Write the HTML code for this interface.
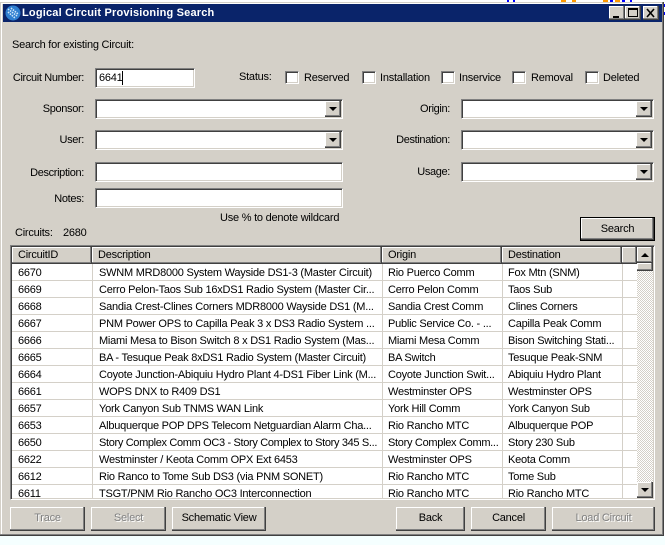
<!DOCTYPE html>
<html><head><meta charset="utf-8"><title>Logical Circuit Provisioning Search</title>
<style>
html,body{margin:0;padding:0;width:665px;height:545px;overflow:hidden;background:#fff}
*{box-sizing:border-box}
body{position:relative;font-family:"Liberation Sans",sans-serif;font-size:11px;letter-spacing:-.23px;color:#000}
div,span.a{position:absolute}
.win{left:0;top:2px;width:664px;height:534px;background:#d4d0c8;box-shadow:inset -1px -1px 0 #404040,inset -2px -2px 0 #808080,inset 1px 1px 0 #d4d0c8,inset 2px 2px 0 #fff}
.tb{left:3px;top:4px;width:659px;height:18px;background:#0a246a}
.tt{left:22px;top:6px;color:#fff;font-weight:bold;letter-spacing:.19px;line-height:14px;white-space:nowrap}
.wb{top:6px;width:16px;height:14px;background:#d4d0c8;box-shadow:inset -1px -1px 0 #404040,inset -2px -2px 0 #808080,inset 1px 1px 0 #fff}
.l{white-space:nowrap;line-height:14px}
.r{text-align:right;letter-spacing:-.35px}
.f{background:#fff;border:1px solid;border-color:#808080 #fff #fff #808080;box-shadow:inset 1px 1px 0 #404040,inset -1px -1px 0 #d4d0c8}
.dd{right:2px;top:2px;width:16px;height:16px;background:#d4d0c8;box-shadow:inset -1px -1px 0 #404040,inset -2px -2px 0 #808080,inset 1px 1px 0 #fff}
.dd:after,.dn:after{content:"";position:absolute;left:4px;top:6px;border:4px solid transparent;border-top:4px solid #000;border-bottom:0}
.c{top:71px;width:14px;height:13px;background:#fff;border:1px solid;border-color:#808080 #fff #fff #808080;box-shadow:inset 1px 1px 0 #404040,inset -1px -1px 0 #d4d0c8}
.b{height:24px;background:#d4d0c8;box-shadow:inset -1px -1px 0 #404040,inset -2px -2px 0 #808080,inset 1px 1px 0 #fff;text-align:center;line-height:23px;white-space:nowrap}
.dis{color:#808080;text-shadow:1px 1px 0 #fff}
.list{left:10px;top:245px;width:645px;height:255px;background:#fff;border:1px solid;border-color:#808080 #fff #fff #808080;box-shadow:inset 1px 1px 0 #404040,inset -1px -1px 0 #d4d0c8}
.h{top:247px;height:17px;background:#d4d0c8;box-shadow:inset -1px -1px 0 #404040,inset -2px -2px 0 #808080,inset 1px 1px 0 #fff;line-height:17px;padding-left:6px;white-space:nowrap}
.row{left:12px;width:625px;height:17px;border-bottom:1px solid #d4d0c8;line-height:18px;white-space:nowrap}
.row span{position:absolute;top:0}
.s1{left:6px}.s2{left:87px}.s3{left:376px}.s4{left:496px}
.v{top:264px;width:1px;height:234px;background:#d4d0c8}
.track{left:637px;top:247px;width:16px;height:251px;background:conic-gradient(#fff 25%,#d4d0c8 0 50%,#fff 0 75%,#d4d0c8 0) 0 0/2px 2px}
.sb{left:637px;width:16px;background:#d4d0c8;box-shadow:inset -1px -1px 0 #404040,inset -2px -2px 0 #808080,inset 1px 1px 0 #fff}
.up:after{content:"";position:absolute;left:4px;top:6px;border:4px solid transparent;border-bottom:4px solid #000;border-top:0}
.px{background:#00f;height:2px;top:0}
.po{background:#f90;height:2px;top:0}
</style></head><body>
<div style="left:0;top:536px;width:665px;height:9px;background:#f5ffff"></div>
<div class="px" style="left:507px;width:2px"></div><div class="px" style="left:513px;width:2px"></div>
<div class="po" style="left:561px;width:5px"></div><div class="po" style="left:572px;width:4px"></div>
<div class="po" style="left:603px;width:5px"></div><div class="px" style="left:610px;width:3px"></div><div class="po" style="left:615px;width:5px"></div><div class="px" style="left:622px;width:3px"></div><div class="px" style="left:630px;width:2px"></div>
<div class="px" style="left:664px;top:4px;width:1px;height:3px"></div><div class="px" style="left:664px;top:12px;width:1px;height:3px"></div>
<div class="win"></div>
<div class="tb"></div>
<svg style="position:absolute;left:5px;top:5px" width="16" height="16" viewBox="0 0 16 16"><circle cx="8" cy="8" r="7.5" fill="#2f7fd0"/><path d="M3 4l9 7M3 7l7 6M6 3l7 6" stroke="#cfe6fa" stroke-width="1.6" stroke-dasharray="1.5 1"/></svg>
<div class="tt">Logical Circuit Provisioning Search</div>
<div class="wb" style="left:609px"><svg width="16" height="14" style="position:absolute;left:0;top:0"><path d="M4 10h6v2H4z" fill="#000"/></svg></div>
<div class="wb" style="left:625px"><svg width="16" height="14" style="position:absolute;left:0;top:0"><path d="M3.500 2.500h9v8h-9zM3 3.500h10" fill="none" stroke="#000"/></svg></div>
<div class="wb" style="left:643px"><svg width="16" height="14" style="position:absolute;left:0;top:0"><path d="M4 3l7 8M11 3l-7 8" fill="none" stroke="#000" stroke-width="1.600"/></svg></div>

<div class="l" style="left:12px;top:38px">Search for existing Circuit:</div>
<div class="l r" style="left:0;width:84px;top:71px">Circuit Number:</div>
<div class="f l" style="left:95px;top:68px;width:100px;height:20px;padding:2px 0 0 3px">6641</div>
<div style="left:122px;top:71px;width:1px;height:14px;background:#000"></div>
<div class="l" style="left:239px;top:70px">Status:</div>
<div class="c" style="left:285px"></div><div class="l" style="left:304px;top:71px">Reserved</div>
<div class="c" style="left:362px"></div><div class="l" style="left:380px;top:71px">Installation</div>
<div class="c" style="left:441px"></div><div class="l" style="left:459px;top:71px">Inservice</div>
<div class="c" style="left:512px"></div><div class="l" style="left:531px;top:71px">Removal</div>
<div class="c" style="left:585px"></div><div class="l" style="left:603px;top:71px">Deleted</div>

<div class="l r" style="left:0;width:84px;top:102px">Sponsor:</div>
<div class="f" style="left:95px;top:99px;width:248px;height:20px"><div class="dd" style="right:1px;top:1px"></div></div>
<div class="l r" style="left:0;width:84px;top:133px">User:</div>
<div class="f" style="left:95px;top:130px;width:248px;height:20px"><div class="dd" style="right:1px;top:1px"></div></div>
<div class="l r" style="left:0;width:84px;top:166px">Description:</div>
<div class="f" style="left:95px;top:162px;width:248px;height:20px"></div>
<div class="l r" style="left:0;width:84px;top:192px">Notes:</div>
<div class="f" style="left:95px;top:188px;width:248px;height:20px"></div>

<div class="l r" style="left:380px;width:70px;top:102px">Origin:</div>
<div class="f" style="left:461px;top:99px;width:193px;height:20px"><div class="dd" style="right:1px;top:1px"></div></div>
<div class="l r" style="left:380px;width:70px;top:133px">Destination:</div>
<div class="f" style="left:461px;top:130px;width:193px;height:20px"><div class="dd" style="right:1px;top:1px"></div></div>
<div class="l r" style="left:380px;width:70px;top:165px">Usage:</div>
<div class="f" style="left:461px;top:162px;width:193px;height:20px"><div class="dd" style="right:1px;top:1px"></div></div>

<div class="l" style="left:220px;top:211px">Use % to denote wildcard</div>
<div class="l" style="left:15px;top:226px">Circuits:</div>
<div class="l" style="left:63px;top:226px">2680</div>
<div class="b" style="left:580px;top:217px;width:75px;border:1px solid #000">Search</div>

<div class="list"></div>
<div class="h" style="left:12px;width:80px">CircuitID</div>
<div class="h" style="left:92px;width:290px">Description</div>
<div class="h" style="left:382px;width:120px">Origin</div>
<div class="h" style="left:502px;width:120px">Destination</div>
<div class="h" style="left:622px;width:15px"></div>

<div class="row" style="top:264px"><span class="s1">6670</span><span class="s2">SWNM MRD8000 System Wayside DS1-3 (Master Circuit)</span><span class="s3">Rio Puerco Comm</span><span class="s4">Fox Mtn (SNM)</span></div>
<div class="row" style="top:281px"><span class="s1">6669</span><span class="s2">Cerro Pelon-Taos Sub 16xDS1 Radio System (Master Cir...</span><span class="s3">Cerro Pelon Comm</span><span class="s4">Taos Sub</span></div>
<div class="row" style="top:298px"><span class="s1">6668</span><span class="s2">Sandia Crest-Clines Corners MDR8000 Wayside DS1 (M...</span><span class="s3">Sandia Crest Comm</span><span class="s4">Clines Corners</span></div>
<div class="row" style="top:315px"><span class="s1">6667</span><span class="s2">PNM Power OPS to Capilla Peak 3 x DS3 Radio System ...</span><span class="s3">Public Service Co. - ...</span><span class="s4">Capilla Peak Comm</span></div>
<div class="row" style="top:332px"><span class="s1">6666</span><span class="s2">Miami Mesa to Bison Switch 8 x DS1 Radio System (Mas...</span><span class="s3">Miami Mesa Comm</span><span class="s4">Bison Switching Stati...</span></div>
<div class="row" style="top:349px"><span class="s1">6665</span><span class="s2">BA - Tesuque Peak 8xDS1 Radio System (Master Circuit)</span><span class="s3">BA Switch</span><span class="s4">Tesuque Peak-SNM</span></div>
<div class="row" style="top:366px"><span class="s1">6664</span><span class="s2">Coyote Junction-Abiquiu Hydro Plant 4-DS1 Fiber Link (M...</span><span class="s3">Coyote Junction Swit...</span><span class="s4">Abiquiu Hydro Plant</span></div>
<div class="row" style="top:383px"><span class="s1">6661</span><span class="s2">WOPS DNX to R409 DS1</span><span class="s3">Westminster OPS</span><span class="s4">Westminster OPS</span></div>
<div class="row" style="top:400px"><span class="s1">6657</span><span class="s2">York Canyon Sub TNMS WAN Link</span><span class="s3">York Hill Comm</span><span class="s4">York Canyon Sub</span></div>
<div class="row" style="top:417px"><span class="s1">6653</span><span class="s2">Albuquerque POP DPS Telecom Netguardian Alarm Cha...</span><span class="s3">Rio Rancho MTC</span><span class="s4">Albuquerque POP</span></div>
<div class="row" style="top:434px"><span class="s1">6650</span><span class="s2" style="letter-spacing:-.34px">Story Complex Comm OC3 - Story Complex to Story 345 S...</span><span class="s3" style="letter-spacing:-.3px">Story Complex Comm...</span><span class="s4">Story 230 Sub</span></div>
<div class="row" style="top:451px"><span class="s1">6622</span><span class="s2">Westminster / Keota Comm OPX Ext 6453</span><span class="s3">Westminster OPS</span><span class="s4">Keota Comm</span></div>
<div class="row" style="top:468px"><span class="s1">6612</span><span class="s2">Rio Ranco to Tome Sub DS3 (via PNM SONET)</span><span class="s3">Rio Rancho MTC</span><span class="s4">Tome Sub</span></div>
<div class="row" style="top:485px;height:14px;border:0;overflow:hidden"><span class="s1">6611</span><span class="s2">TSGT/PNM Rio Rancho OC3 Interconnection</span><span class="s3">Rio Rancho MTC</span><span class="s4">Rio Rancho MTC</span></div>

<div class="v" style="left:92px"></div><div class="v" style="left:382px"></div><div class="v" style="left:502px"></div><div class="v" style="left:622px"></div>

<div class="track"></div>
<div class="sb up" style="top:247px;height:16px"></div>
<div class="sb" style="top:263px;height:8px"></div>
<div class="sb dn" style="top:482px;height:16px"></div>

<div class="b dis" style="left:10px;top:507px;width:75px">Trace</div>
<div class="b dis" style="left:91px;top:507px;width:75px">Select</div>
<div class="b" style="left:172px;top:507px;width:94px">Schematic View</div>
<div class="b" style="left:396px;top:507px;width:69px">Back</div>
<div class="b" style="left:471px;top:507px;width:75px">Cancel</div>
<div class="b dis" style="left:552px;top:507px;width:103px">Load Circuit</div>
</body></html>
